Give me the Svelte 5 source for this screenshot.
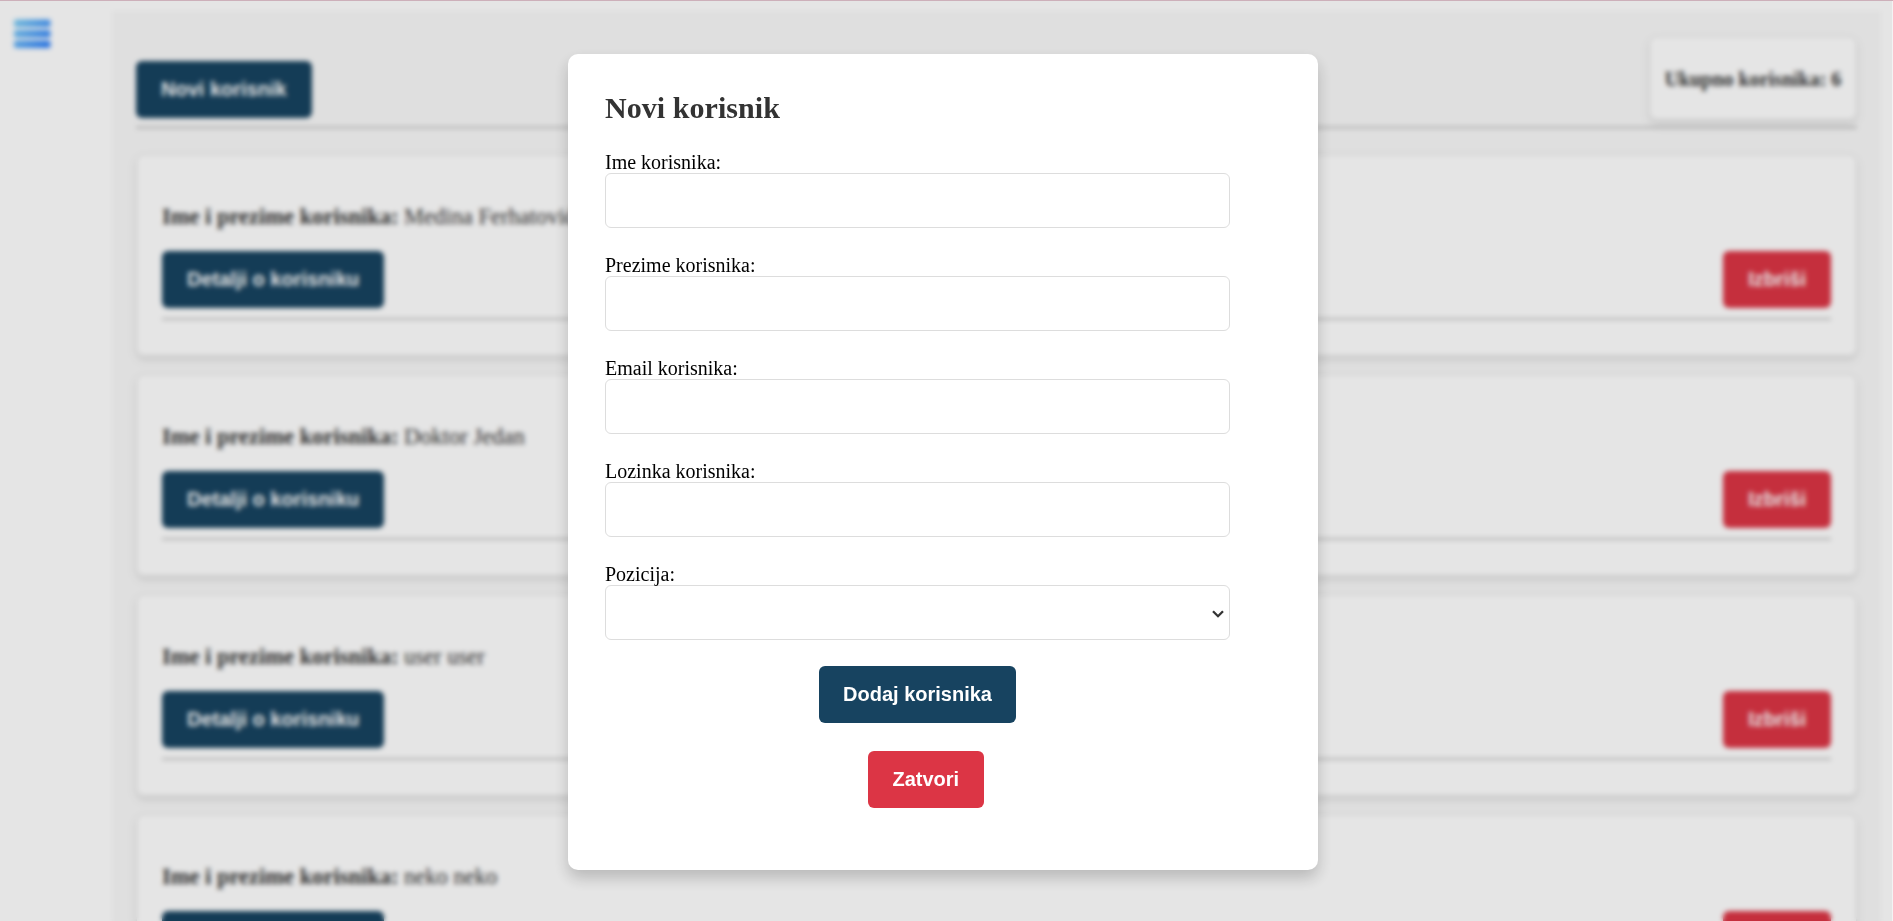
<script>
  const users = ['Medina Ferhatović', 'Doktor Jedan', 'user user', 'neko neko'];
  const fields = [
    { id: 'ime', label: 'Ime korisnika:', type: 'text' },
    { id: 'prezime', label: 'Prezime korisnika:', type: 'text' },
    { id: 'email', label: 'Email korisnika:', type: 'email' },
    { id: 'lozinka', label: 'Lozinka korisnika:', type: 'password' }
  ];
</script>

<div class="page">
  <aside>
    <svg width="37" height="30" viewBox="0 0 37 30">
      <defs>
        <linearGradient id="menu" x1="0" y1="0" x2="37" y2="30" gradientUnits="userSpaceOnUse">
          <stop offset="0" stop-color="#7fd0f5" />
          <stop offset="1" stop-color="#2477fa" />
        </linearGradient>
      </defs>
      <g fill="url(#menu)">
        <rect y="0.5" width="36.5" height="7.5" rx="2" />
        <rect y="11" width="36.5" height="7.5" rx="2" />
        <rect y="21.5" width="36.5" height="7.5" rx="2" />
      </g>
    </svg>
  </aside>
  <main>
    <header>
      <button class="btn">Novi korisnik</button>
      <div class="count">Ukupno korisnika: 6</div>
    </header>
    {#each users as user}
      <section class="card">
        <p><strong>Ime i prezime korisnika:</strong> {user}</p>
        <div class="actions">
          <button class="btn">Detalji o korisniku</button>
          <button class="btn danger">Izbriši</button>
        </div>
      </section>
    {/each}
  </main>
</div>

<div class="overlay">
  <div class="modal">
    <h2>Novi korisnik</h2>
    <form>
      {#each fields as field}
        <div class="field">
          <label for={field.id}>{field.label}</label>
          <input id={field.id} type={field.type} />
        </div>
      {/each}
      <div class="field">
        <label for="pozicija">Pozicija:</label>
        <div class="select">
          <svg width="12" height="8" viewBox="0 0 12 8"><path d="M1 1.2 6 6.2 11 1.2" fill="none" stroke="#333" stroke-width="2.3" /></svg>
        </div>
      </div>
      <button type="button" class="btn submit">Dodaj korisnika</button>
    </form>
    <button class="btn danger close">Zatvori</button>
  </div>
</div>
<div class="topline"></div>

<style>
  :global(body) {
    overflow: hidden;
    background: #f3f3f3;
    font-family: 'Liberation Serif', serif;
  }
  .page {
    display: flex;
    box-sizing: border-box;
    height: 921px;
    margin-right: 1px;
    padding: 11px 11px 0 0;
    overflow: hidden;
    background: #fff;
  }
  aside {
    box-sizing: border-box;
    flex: 0 0 112px;
    padding: 8px 0 0 14px;
  }
  aside svg {
    display: block;
  }
  main {
    flex: 1;
    height: 1100px;
    box-sizing: border-box;
    padding: 26px 24px 0;
    background: #f9f9f9;
  }
  header {
    display: flex;
    align-items: flex-start;
    justify-content: space-between;
    box-sizing: border-box;
    height: 92px;
    margin-bottom: 25px;
    border-bottom: 3px solid #d2d2d2;
  }
  header .btn {
    margin-top: 24px;
  }
  .count {
    box-sizing: border-box;
    width: 208px;
    height: 84px;
    margin-top: -1px;
    border: 1px solid #e4e4e4;
    border-radius: 8px;
    background: #fff;
    box-shadow: 0 4px 8px rgba(0, 0, 0, 0.1);
    color: #333;
    font-size: 20px;
    font-weight: bold;
    line-height: 84px;
    text-align: center;
  }
  .btn {
    display: block;
    box-sizing: border-box;
    height: 57px;
    padding: 0 25px;
    border: 0;
    border-radius: 6px;
    background: #174360;
    color: #fff;
    font: bold 20px/57px 'Liberation Sans', sans-serif;
    white-space: nowrap;
  }
  .danger {
    background: #dc3545;
  }
  .card {
    box-sizing: border-box;
    height: 202px;
    margin-bottom: 18px;
    padding: 25px;
    border: 1px solid #e4e4e4;
    border-radius: 8px;
    background: #fff;
    box-shadow: 0 4px 8px rgba(0, 0, 0, 0.1);
  }
  .card p {
    margin: 23px 0 21px;
    color: #333;
    font-size: 22.5px;
    line-height: 27px;
  }
  .actions {
    display: flex;
    justify-content: space-between;
    padding-bottom: 10px;
    border-bottom: 2px solid #c6c6c6;
  }
  .overlay {
    position: fixed;
    inset: 0 1px 0 0;
    display: flex;
    align-items: flex-start;
    justify-content: center;
    background: rgba(0, 0, 0, 0.1);
    backdrop-filter: blur(2.5px);
  }
  .modal {
    box-sizing: border-box;
    width: 750px;
    height: 816px;
    margin: 54px 6px 0 0;
    padding: 37px;
    border-radius: 10px;
    background: #fff;
    box-shadow: 0 8px 16px rgba(0, 0, 0, 0.2);
  }
  h2 {
    margin: 0;
    color: #333;
    font-size: 30px;
    line-height: 34px;
    letter-spacing: 0.05px;
  }
  form {
    width: 625px;
    padding-top: 26px;
  }
  .field {
    margin-bottom: 26px;
  }
  label {
    display: block;
    color: #000;
    font-size: 20px;
    line-height: 22px;
  }
  input,
  .select {
    display: flex;
    align-items: center;
    justify-content: flex-end;
    box-sizing: border-box;
    width: 625px;
    height: 55px;
    border: 1px solid #ddd;
    border-radius: 6px;
    background: #fff;
  }
  .select {
    padding: 2px 5px 0 0;
  }
  .submit {
    margin: 0 auto;
    padding: 0 24.5px;
  }
  .close {
    margin: 28px 0 0 263px;
    padding: 0 24.5px;
  }
  .topline {
    position: fixed;
    inset: 0 0 auto;
    height: 1px;
    background: #cdb0ba;
  }
</style>
